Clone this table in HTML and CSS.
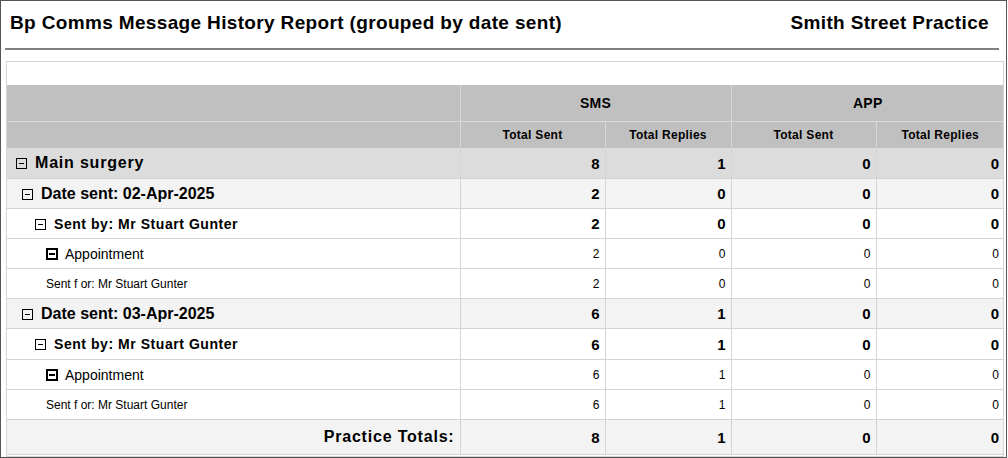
FILE: index.html
```html
<!DOCTYPE html>
<html>
<head>
<meta charset="utf-8">
<link rel="stylesheet" href="styles.css">
</head>
<body>
<div class="frame">
  <div class="head">
    <div class="title">Bp Comms Message History Report (grouped by date sent)</div>
    <div class="practice">Smith Street Practice</div>
  </div>
  <div class="rule"></div>
  <div class="report">
    <div class="spacer"></div>
    <table class="grid">
      <colgroup>
        <col class="c-label"><col class="c-n1"><col class="c-n2"><col class="c-n3"><col class="c-n4">
      </colgroup>
      <thead>
        <tr class="h1"><th></th><th colspan="2">SMS</th><th colspan="2">APP</th></tr>
        <tr class="h2"><th></th><th>Total Sent</th><th>Total Replies</th><th>Total Sent</th><th>Total Replies</th></tr>
      </thead>
      <tbody>
        <tr class="lv1"><td><span class="tog"></span>Main surgery</td><td>8</td><td>1</td><td>0</td><td>0</td></tr>
        <tr class="lv2"><td><span class="tog"></span>Date sent:&nbsp;02-Apr-2025</td><td>2</td><td>0</td><td>0</td><td>0</td></tr>
        <tr class="lv3"><td><span class="tog"></span>Sent by: Mr Stuart Gunter</td><td>2</td><td>0</td><td>0</td><td>0</td></tr>
        <tr class="lv4"><td><span class="tog"></span>Appointment</td><td>2</td><td>0</td><td>0</td><td>0</td></tr>
        <tr class="lv5"><td>Sent f or: Mr Stuart Gunter</td><td>2</td><td>0</td><td>0</td><td>0</td></tr>
        <tr class="lv2"><td><span class="tog"></span>Date sent:&nbsp;03-Apr-2025</td><td>6</td><td>1</td><td>0</td><td>0</td></tr>
        <tr class="lv3 tall"><td><span class="tog"></span>Sent by: Mr Stuart Gunter</td><td>6</td><td>1</td><td>0</td><td>0</td></tr>
        <tr class="lv4"><td><span class="tog"></span>Appointment</td><td>6</td><td>1</td><td>0</td><td>0</td></tr>
        <tr class="lv5"><td>Sent f or: Mr Stuart Gunter</td><td>6</td><td>1</td><td>0</td><td>0</td></tr>
        <tr class="total"><td>Practice Totals:</td><td>8</td><td>1</td><td>0</td><td>0</td></tr>
      </tbody>
    </table>
  </div>
</div>
</body>
</html>
```
FILE: styles.css
```css
html, body { margin: 0; padding: 0; background: #fff; }
body { font-family: "Liberation Sans", Arial, sans-serif; color: #000; }
.frame {
  width: 1005px; height: 456px;
  border: 1px solid #555;
  overflow: hidden;
}
.head {
  display: flex; justify-content: space-between; align-items: center;
  height: 44px; padding: 0 17px 0 9px;
}
.title, .practice { font-size: 19px; font-weight: bold; letter-spacing: 0.35px; }
.rule { height: 2px; background: #808080; margin: 3px 7px 0 4px; }
.report {
  margin: 11px 2px 0 5px;
  border: 1px solid #d4d4d4;
  height: 394px;
  overflow: hidden;
}
.spacer { height: 23px; }
.grid { border-collapse: collapse; width: 997px; table-layout: fixed; }
.c-label { width: 453px; }
.c-n1 { width: 145px; }
.c-n2 { width: 126px; }
.c-n3 { width: 145px; }
.c-n4 { width: 128px; }
.grid th { background: #c0c0c0; font-weight: bold; border-left: 1px solid #d8d8d8; padding: 0; }
.grid th:first-child { border-left: none; }
.h1 th { height: 36px; font-size: 14px; border-bottom: 1px solid #d8d8d8; letter-spacing: 0.3px; }
.h2 th { height: 26px; font-size: 12px; letter-spacing: 0.3px; }
.grid td {
  height: 29px; padding: 0 5px 0 0; border-bottom: 1px solid #d4d4d4; border-left: 1px solid #d4d4d4;
  text-align: right; font-weight: bold; font-size: 15px; white-space: nowrap;
}
.grid td:first-child { border-left: none; text-align: left; }
.lv1 td { background: #dcdcdc; height: 30px; }
.lv1 td:first-child { padding-left: 9px; font-size: 16px; letter-spacing: 0.8px; }
.lv2 td { background: #f3f3f3; }
.lv2 td:first-child { padding-left: 15px; font-size: 16px; }
.tall td { height: 30px; }
.lv3 td:first-child { padding-left: 28px; font-size: 14px; letter-spacing: 0.55px; }
.lv4 td { font-weight: normal; font-size: 12px; }
.lv4 td:first-child { padding-left: 39px; font-size: 14px; }
.lv5 td { font-weight: normal; font-size: 12px; }
.lv5 td:first-child { padding-left: 39px; font-size: 12px; }
.total td { background: #f3f3f3; height: 34px; }
.total td:first-child { text-align: right; font-size: 16px; letter-spacing: 0.8px; padding-right: 5px; }
.tog {
  display: inline-block; width: 9px; height: 9px; border: 1px solid #000;
  position: relative; vertical-align: -1px; margin-right: 8px; box-sizing: content-box;
}
.tog::after {
  content: ""; position: absolute; left: 2px; right: 2px; top: 4px; height: 1px; background: #000;
}
.lv4 .tog { border-width: 2px; width: 8px; height: 8px; margin-right: 7px; }
.lv4 .tog::after { left: 1px; right: 1px; top: 3px; height: 2px; }
```
